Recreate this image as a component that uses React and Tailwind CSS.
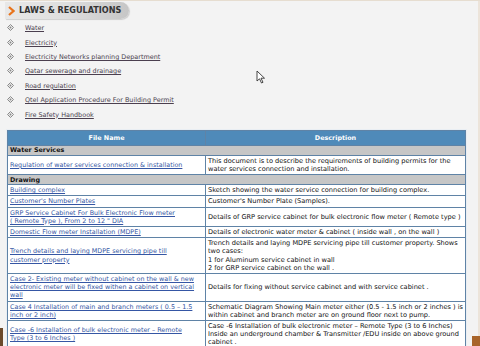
import React from "react";

const links = [
  "Water",
  "Electricity",
  "Electricity Networks planning Department",
  "Qatar sewerage and drainage",
  "Road regulation",
  "Qtel Application Procedure For Building Permit",
  "Fire Safety Handbook",
];

const sections = [
  {
    title: "Water Services",
    rows: [
      {
        name: ["Regulation of water services connection & installation"],
        desc: [
          "This document is to describe the requirements of building permits for the",
          "water services connection and installation.",
        ],
      },
    ],
  },
  {
    title: "Drawing",
    rows: [
      { name: ["Building complex"], desc: ["Sketch showing the water service connection for building complex."] },
      { name: ["Customer's Number Plates"], desc: ["Customer's Number Plate (Samples)."] },
      {
        name: ["GRP Service Cabinet For Bulk Electronic Flow meter", "( Remote Type ), From 2 to 12 \" DIA"],
        desc: ["Details of GRP service cabinet for bulk electronic flow meter ( Remote type )"],
      },
      {
        name: ["Domestic Flow meter Installation (MDPE)"],
        desc: ["Details of electronic water meter & cabinet ( inside wall , on the wall )"],
      },
      {
        name: ["Trench details and laying MDPE servicing pipe till", "customer property"],
        desc: [
          "Trench details and laying MDPE servicing pipe till customer property. Shows",
          "two cases:",
          "1 for Aluminum service cabinet in wall",
          "2 for GRP service cabinet on the wall .",
        ],
      },
      {
        name: [
          "Case 2- Existing meter without cabinet on the wall & new",
          "electronic meter will be fixed withen a cabinet on vertical",
          "wall",
        ],
        desc: ["Details for fixing without service cabinet and with service cabinet ."],
      },
      {
        name: ["Case 4 Installation of main and branch meters ( 0.5 – 1.5", "inch or 2 inch)"],
        desc: [
          "Schematic Diagram Showing Main meter either (0.5 - 1.5 inch or 2 inches ) is",
          "within cabinet and branch meter are on ground floor next to pump.",
        ],
      },
      {
        name: ["Case -6 Installation of bulk electronic meter – Remote", "Type (3 to 6 Inches )"],
        desc: [
          "Case -6 Installation of bulk electronic meter – Remote Type (3 to 6 Inches)",
          "Inside an underground chamber & Transmitter /EDU inside on above ground",
          "cabinet .",
        ],
      },
    ],
  },
];

function Bullet() {
  return (
    <svg width="7" height="8" viewBox="0 0 7 8" className="shrink-0">
      <path d="M3.5 0.5 L6.5 3.5 L3.5 6.5 L0.5 3.5 Z" fill="#e8e8e8" stroke="#8a8a8a" strokeWidth="1" />
      <circle cx="3.5" cy="3.5" r="0.9" fill="#8a8a8a" />
    </svg>
  );
}

function Lines({ lines }) {
  return lines.map((l, i) => (
    <React.Fragment key={i}>
      {l}
      {i < lines.length - 1 && <br />}
    </React.Fragment>
  ));
}

export default function App() {
  return (
    <div
      className="relative w-[480px] h-[346px] overflow-hidden bg-[#f3f3f3] border-t border-[#e6ddd0]"
      style={{ fontFamily: "'DejaVu Sans', Verdana, sans-serif" }}
    >
      {/* title tab */}
      <div className="ml-[5px] mt-[1px] w-[124px] h-[17px] flex items-center gap-[4px] pl-[3px] rounded-r-full bg-gradient-to-r from-[#e8e8e8] via-[#dedede] to-[#c6c6c6] shadow-[1px_1px_1px_rgba(0,0,0,0.15)]">
        <svg width="7" height="10" viewBox="0 0 7 10">
          <path d="M1 1 L5.5 5 L1 9" fill="none" stroke="#e8741c" strokeWidth="2.2" />
        </svg>
        <span className="text-[8.1px] font-bold text-[#333]">LAWS &amp; REGULATIONS</span>
      </div>

      {/* links list */}
      <ul className="mt-[2px] flex flex-col">
        {links.map((l) => (
          <li key={l} className="h-[14.4px] flex items-center pl-[7px] gap-[11px]">
            <Bullet />
            <a className="text-[6.45px] leading-[8px] text-[#4b3f4f] underline">{l}</a>
          </li>
        ))}
      </ul>

      {/* table */}
      <div className="mt-[7px] ml-[6px] w-[461px] border border-[#e9eef3]">
        <table className="w-full border-separate border-spacing-[1px] bg-[#5f83a6] text-[6.4px] leading-[8.2px]">
          <thead>
            <tr className="bg-[#4f8ab9] text-white font-bold h-[14px]">
              <th className="w-[197px] font-bold">File Name</th>
              <th className="font-bold">Description</th>
            </tr>
          </thead>
          <tbody>
            {sections.map((s) => (
              <React.Fragment key={s.title}>
                <tr>
                  <td colSpan={2} className="bg-[#c6c6c6] font-bold text-[#111] px-[2px] h-[9px] leading-[8px]">
                    {s.title}
                  </td>
                </tr>
                {s.rows.map((r, i) => (
                  <tr key={i}>
                    <td className="bg-white px-[2px] py-[1px] align-middle">
                      <a className="text-[#3556a4] underline">
                        <Lines lines={r.name} />
                      </a>
                    </td>
                    <td className="bg-white px-[2px] py-[1px] text-[6.6px] text-[#111] align-middle">
                      <Lines lines={r.desc} />
                    </td>
                  </tr>
                ))}
              </React.Fragment>
            ))}
          </tbody>
        </table>
      </div>

      {/* mouse cursor */}
      <svg className="absolute left-[256px] top-[69px]" width="10" height="14" viewBox="0 0 10 14">
        <path d="M1 1 L1 11 L3.5 8.8 L5.5 13 L7 12.3 L5 8.2 L8.5 8.2 Z" fill="#fff" stroke="#333" strokeWidth="0.9" />
      </svg>

      {/* frame fragments */}
      <div className="absolute right-0 top-0 w-[2px] h-full bg-[#ece4da]" />
      <div className="absolute left-0 bottom-0 w-[3px] h-[18px] bg-[#6b4a2c]" />
      <div className="absolute right-0 bottom-0 w-[8px] h-[10px] bg-[#a8642a]" />
    </div>
  );
}
